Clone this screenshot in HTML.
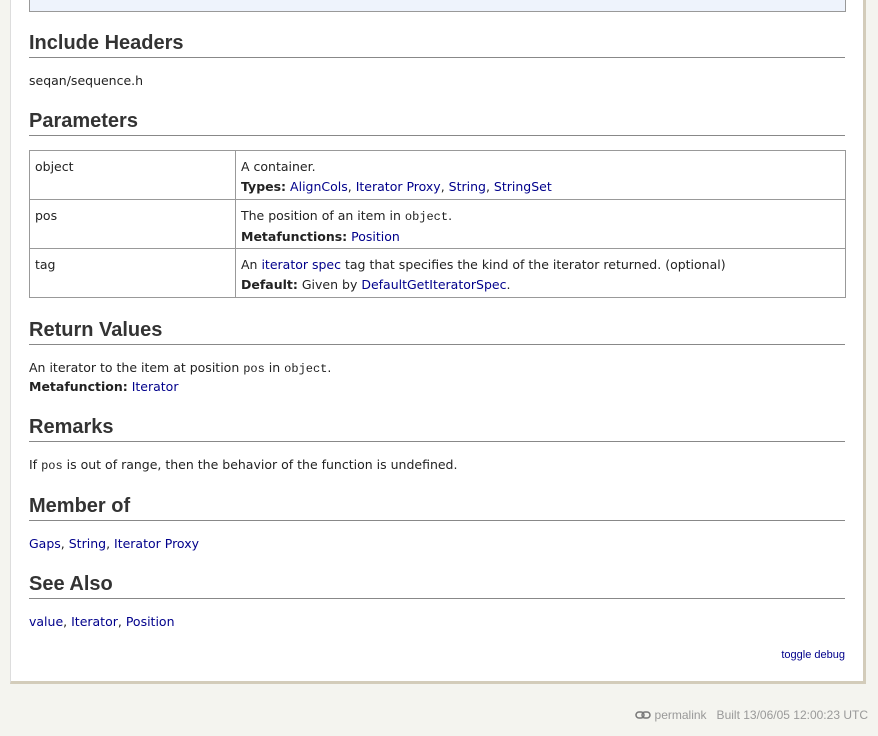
<!DOCTYPE html>
<html><head><meta charset="utf-8"><style>
body{margin:0;width:878px;height:736px;background:#f4f4ef;font-family:"DejaVu Sans","Liberation Sans",sans-serif;font-size:12.5px;color:#222;position:relative;overflow:hidden}
.panel{position:absolute;left:10px;top:-5px;width:852px;height:685px;background:#fff;border:1px solid #ddd;border-right:3px solid #d3ccba;border-bottom:3px solid #d3ccba}
.a{position:absolute;white-space:nowrap}
.h{position:absolute;left:29px;width:816px;font-family:"Liberation Sans",sans-serif;font-size:20px;font-weight:bold;color:#333;border-bottom:1px solid #888;height:27px;line-height:26px}
a{color:#00008b;text-decoration:none}
code{font-family:"Liberation Mono",monospace;font-size:12px}
table{position:absolute;left:29px;top:150px;width:817px;border-collapse:collapse}
td{border:1px solid #999;vertical-align:top;padding:6px 5px 0 5px;height:42px;line-height:20px}
</style></head><body>
<div class="panel"></div>
<div class="a" style="left:29px;top:-5px;width:815px;height:15px;background:#eef3fc;border:1px solid #999"></div>
<div class="h" style="top:30px">Include Headers</div>
<div class="a" style="left:29px;top:73px">seqan/sequence.h</div>
<div class="h" style="top:108px">Parameters</div>
<table>
<tr><td style="width:195px">object</td><td>A container.<br><b>Types:</b> <a>AlignCols</a>, <a>Iterator Proxy</a>, <a>String</a>, <a>StringSet</a></td></tr>
<tr><td>pos</td><td>The position of an item in <code>object</code>.<br><b>Metafunctions:</b> <a>Position</a></td></tr>
<tr><td>tag</td><td>An <a>iterator spec</a> tag that specifies the kind of the iterator returned. (optional)<br><b>Default:</b> Given by <a>DefaultGetIteratorSpec</a>.</td></tr>
</table>
<div class="h" style="top:317px">Return Values</div>
<div class="a" style="left:29px;top:360px">An iterator to the item at position <code>pos</code> in <code>object</code>.</div>
<div class="a" style="left:29px;top:379px"><b>Metafunction:</b> <a>Iterator</a></div>
<div class="h" style="top:414px">Remarks</div>
<div class="a" style="left:29px;top:457px">If <code>pos</code> is out of range, then the behavior of the function is undefined.</div>
<div class="h" style="top:493px">Member of</div>
<div class="a" style="left:29px;top:536px"><a>Gaps</a>, <a>String</a>, <a>Iterator Proxy</a></div>
<div class="h" style="top:571px">See Also</div>
<div class="a" style="left:29px;top:614px"><a>value</a>, <a>Iterator</a>, <a>Position</a></div>
<div class="a" style="right:33px;top:649px;font-size:11px;font-family:'Liberation Sans',sans-serif"><a>toggle debug</a></div>
<div class="a" style="right:10px;top:708px;font-size:12px;color:#999;font-family:'Liberation Sans',sans-serif"><svg width="16" height="8" viewBox="0 0 16 8" style="vertical-align:0"><rect x="1" y="1" width="8" height="6" rx="3" fill="none" stroke="#777" stroke-width="1.5"/><rect x="7" y="1" width="8" height="6" rx="3" fill="none" stroke="#777" stroke-width="1.5"/></svg> permalink &nbsp; Built 13/06/05 12:00:23 UTC</div>
</body></html>
